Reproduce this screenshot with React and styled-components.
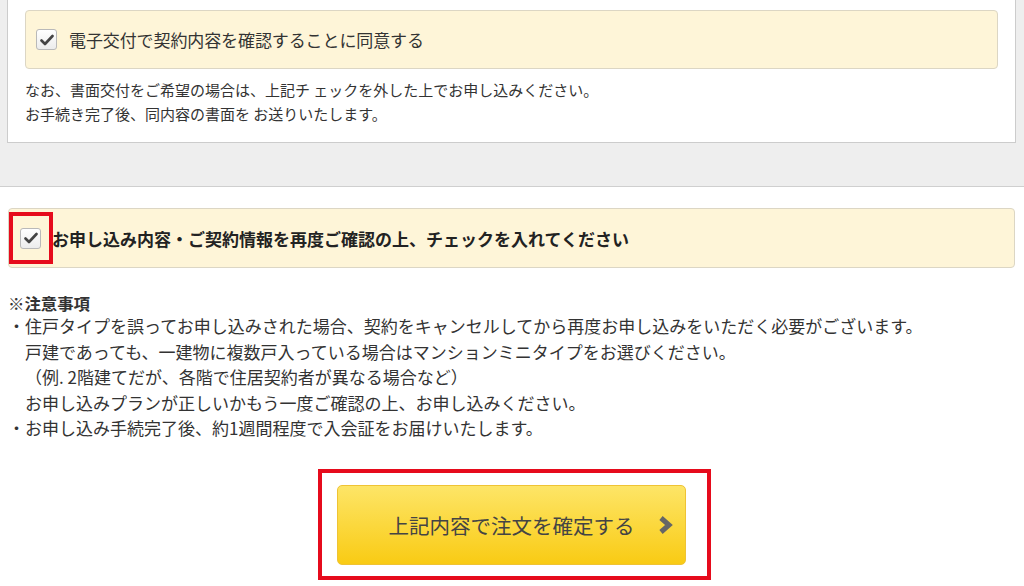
import React from 'react';
import styled, { createGlobalStyle } from 'styled-components';

const GlobalStyle = createGlobalStyle`
  body {
    margin: 0;
    background: #fff;
    color: #333;
    font-family: "Noto Sans CJK JP", "Noto Sans", sans-serif;
  }
`;

const CheckMark = () => (
  <svg width="14" height="12" viewBox="0 0 14 12">
    <path d="M1.5 6.5 L5 10 L12.5 2" fill="none" stroke="#444" strokeWidth="2.6" strokeLinecap="round" strokeLinejoin="round" />
  </svg>
);

const Chevron = () => (
  <svg width="15" height="19" viewBox="0 0 15 19">
    <path d="M3 2.5 L11 9.5 L3 16.5" fill="none" stroke="#666" strokeWidth="5" strokeLinejoin="miter" />
  </svg>
);

const App = () => {
  const notes = [
    { text: '・住戸タイプを誤ってお申し込みされた場合、契約をキャンセルしてから再度お申し込みをいただく必要がございます。' },
    { text: '戸建であっても、一建物に複数戸入っている場合はマンションミニタイプをお選びください。', indent: true },
    { text: '（例. 2階建てだが、各階で住居契約者が異なる場合など）', indent: true },
    { text: 'お申し込みプランが正しいかもう一度ご確認の上、お申し込みください。', indent: true },
    { text: '・お申し込み手続完了後、約1週間程度で入会証をお届けいたします。' },
  ];

  return (
    <Page>
      <GlobalStyle />
      <TopArea>
        <Panel>
          <AgreeBox>
            <CheckBox><CheckMark /></CheckBox>
            <AgreeLabel>電子交付で契約内容を確認することに同意する</AgreeLabel>
          </AgreeBox>
          <PanelNote>
            なお、書面交付をご希望の場合は、上記チ ェックを外した上でお申し込みください。<br />
            お手続き完了後、同内容の書面を お送りいたします。
          </PanelNote>
        </Panel>
      </TopArea>

      <Section>
        <ConfirmBox>
          <CheckBox><CheckMark /></CheckBox>
          <ConfirmLabel>お申し込み内容・ご契約情報を再度ご確認の上、チェックを入れてください</ConfirmLabel>
          <Highlight />
        </ConfirmBox>

        <NoteTitle>※注意事項</NoteTitle>
        <NoteList>
          {notes.map((n, i) => (
            <NoteLine key={i} $indent={n.indent}>{n.text}</NoteLine>
          ))}
        </NoteList>

        <ButtonRow>
          <RedFrame>
            <SubmitButton type="button">
              上記内容で注文を確定する
              <ChevronWrap><Chevron /></ChevronWrap>
            </SubmitButton>
          </RedFrame>
        </ButtonRow>
      </Section>
    </Page>
  );
};

export default App;

const Page = styled.div`
  width: 1024px;
  height: 586px;
  overflow: hidden;
  background: #fff;
`;

const TopArea = styled.div`
  height: 186px;
  background: #eeeeee;
  border-bottom: 1px solid #cfcfcf;
  padding: 0 8px 0 7px;
`;

const Panel = styled.div`
  background: #fff;
  border: 1px solid #cccccc;
  border-top: none;
  padding: 10px 17px 16px 17px;
`;

const AgreeBox = styled.div`
  display: flex;
  align-items: center;
  gap: 12px;
  height: 57px;
  padding-left: 10px;
  background: #fef5d8;
  border: 1px solid #dcd6c4;
  border-radius: 4px;
`;

const CheckBox = styled.span`
  display: flex;
  align-items: center;
  justify-content: center;
  flex-shrink: 0;
  width: 19px;
  height: 19px;
  border: 1px solid #b9b9b9;
  border-radius: 3px;
  background: linear-gradient(#ffffff, #ececec);
`;

const AgreeLabel = styled.span`
  font-size: 17px;
  color: #333;
  letter-spacing: -0.1px;
`;

const PanelNote = styled.p`
  margin: 9px 0 0;
  font-size: 15px;
  line-height: 24px;
  color: #333;
`;

const Section = styled.div`
  padding: 21px 9px 0 8px;
`;

const ConfirmBox = styled.div`
  position: relative;
  display: flex;
  align-items: center;
  gap: 11px;
  height: 58px;
  padding-left: 11px;
  background: #fef5d8;
  border: 1px solid #dcd6c4;
  border-radius: 4px;
`;

const ConfirmLabel = styled.span`
  font-size: 17px;
  font-weight: bold;
  color: #222;
`;

const Highlight = styled.span`
  position: absolute;
  left: 0;
  top: 3px;
  width: 36px;
  height: 44px;
  border: 4px solid #e60b1c;
`;

const NoteTitle = styled.div`
  margin-top: 25px;
  font-size: 16.4px;
  font-weight: bold;
  line-height: 20px;
  color: #333;
`;

const NoteList = styled.div`
  display: flex;
  flex-direction: column;
`;

const NoteLine = styled.div`
  font-size: 17px;
  line-height: 25.5px;
  color: #333;
  white-space: nowrap;
  padding-left: ${(p) => (p.$indent ? '17px' : '0')};
`;

const ButtonRow = styled.div`
  display: flex;
  justify-content: center;
  margin-top: 28px;
  padding-left: 6px;
`;

const RedFrame = styled.div`
  border: 4px solid #e60b1c;
  padding: 12px 21px 11px 15px;
`;

const SubmitButton = styled.button`
  position: relative;
  width: 349px;
  height: 80px;
  border: 1px solid #efc334;
  border-radius: 5px;
  background: linear-gradient(#fde567, #f9cb14);
  font-family: "Noto Sans CJK JP", "Noto Sans", sans-serif;
  font-size: 20.5px;
  color: #444;
  cursor: pointer;
  padding: 0;
`;

const ChevronWrap = styled.span`
  position: absolute;
  right: 12px;
  top: 50%;
  transform: translateY(-50%);
  display: flex;
`;
